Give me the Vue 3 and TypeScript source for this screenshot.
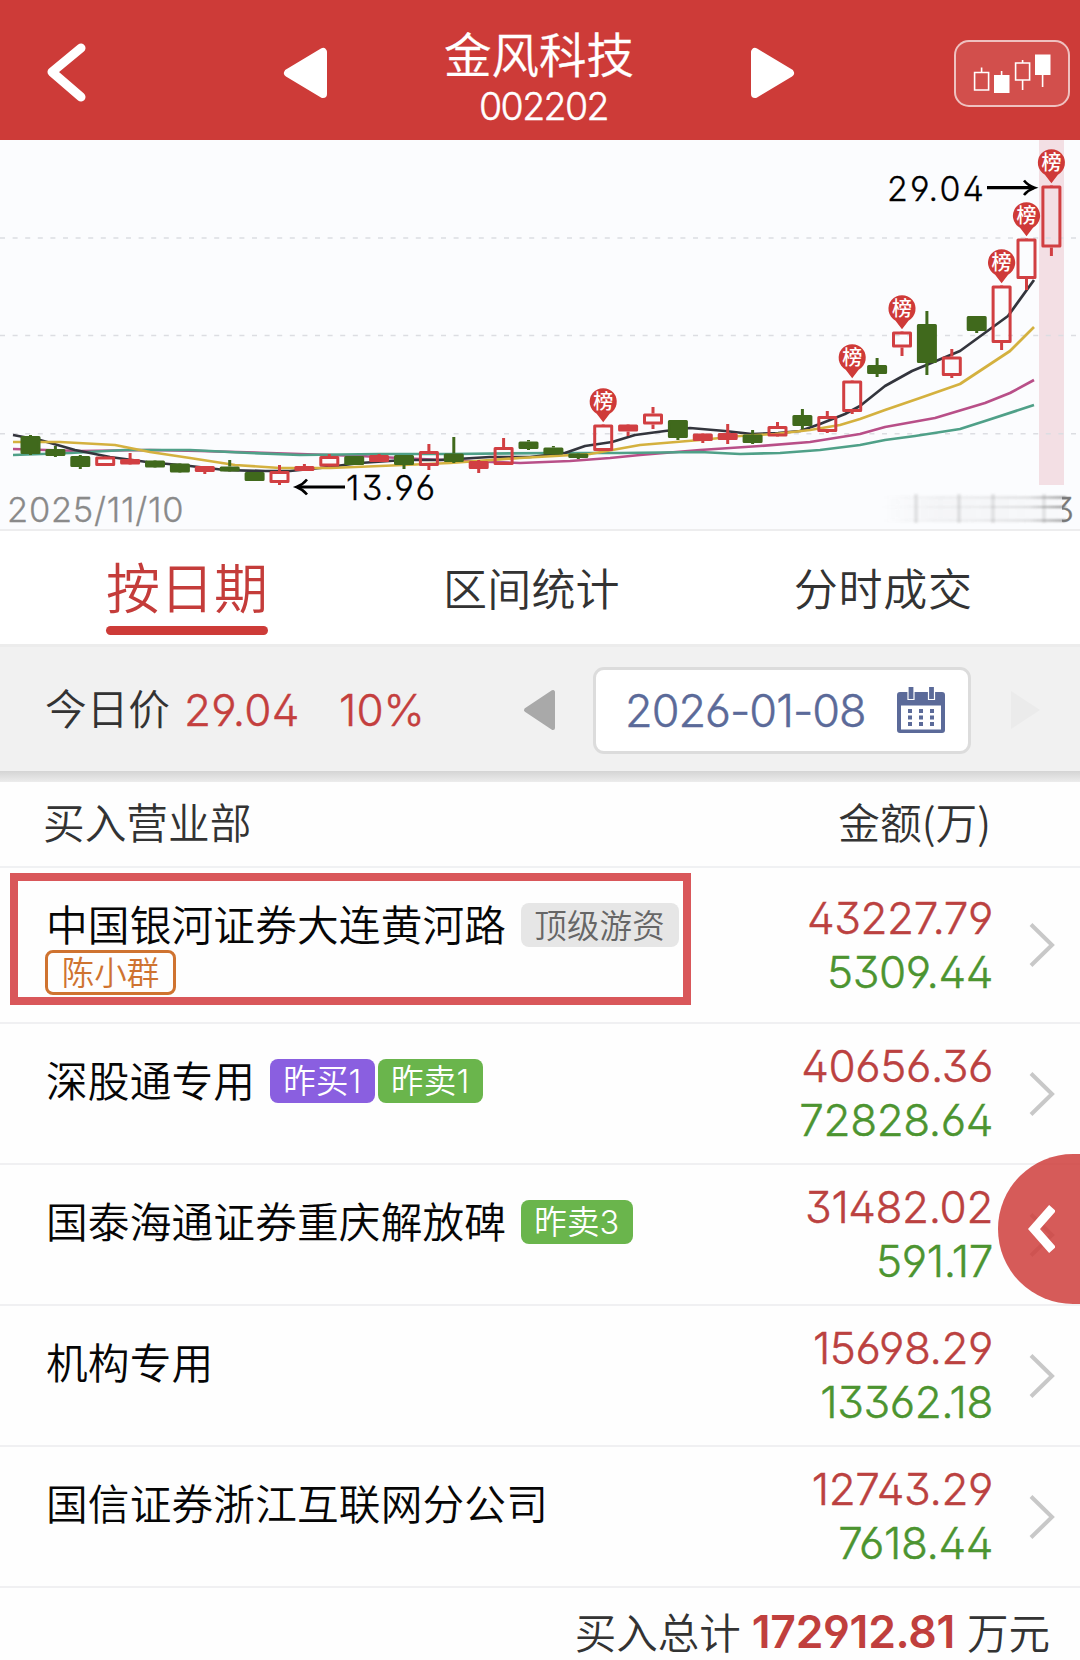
<script setup lang="ts">
type Kind = 'up' | 'down' | 'flat'
interface Candle { kind: Kind; top: number; bottom: number; high: number; low: number; listed?: boolean }
interface Tag { text: string; tone: string }
interface Seat { name: string; tags: Tag[]; owner?: string; buy: string; sell: string; focus?: boolean }

// kind, body top, body bottom, wick high, wick low, on the billboard list
const raw: [Kind, number, number, number, number, boolean?][] = [
  ['down', 436, 454, 435, 455], ['down', 449, 456, 446, 457], ['down', 456, 467, 455, 469],
  ['up', 456.5, 466, 456, 466], ['flat', 459, 464.5, 453, 465], ['down', 460.5, 467.5, 461, 468],
  ['down', 463.5, 472.5, 464, 473], ['flat', 466, 472, 466, 474], ['down', 466.5, 471.5, 460, 472],
  ['down', 472, 481, 472, 481], ['up', 471, 483, 465, 485], ['flat', 466, 471, 464, 471],
  ['up', 456, 466.5, 454, 467], ['down', 456, 465, 456, 465], ['flat', 455, 462, 454, 462],
  ['down', 455, 465, 455, 469], ['up', 451, 466, 444, 470], ['down', 453.5, 462, 437, 463],
  ['flat', 461, 469, 460, 473], ['up', 447, 465, 438, 465], ['down', 441.5, 449, 440, 450],
  ['down', 447.5, 454.5, 446, 455], ['down', 453.5, 458, 454, 459], ['up', 424.5, 451, 425, 451, true],
  ['flat', 424.5, 431.5, 424, 436], ['up', 413.5, 424.5, 407, 429], ['down', 420, 438, 420, 440],
  ['flat', 433.5, 441, 433, 443], ['flat', 433, 440, 424, 444], ['down', 434.5, 443, 430, 444],
  ['up', 426, 436.5, 422, 436], ['down', 415, 426, 409, 429], ['up', 416, 432, 411, 433],
  ['up', 380.5, 412, 381, 414, true], ['down', 365, 374, 358, 377], ['up', 331.5, 347.5, 332, 356, true],
  ['down', 324, 363, 311, 375], ['up', 356.5, 376, 349, 378], ['down', 316, 331, 316, 333],
  ['up', 285.5, 343, 285, 350, true], ['up', 238.5, 279, 239, 290, true], ['up', 185.5, 247.5, 186, 256, true],
]
const candles = raw.map(([kind, top, bottom, high, low, listed], i) => {
  const c: Candle = { kind, top, bottom, high, low, listed }
  return { ...c, x: 30.5 + i * 24.9, color: kind === 'down' ? '#40691c' : '#d13f42' }
})

const averages = [
  { color: '#b84f88', pts: '13,449 80,451 150,450 200,451 300,454 360,456 420,459 520,463 570,461 610,458 640,455 700,450 760,446 810,442 860,434 885,427 935,418 985,403 1010,393 1034,380' },
  { color: '#4fa088', pts: '13,455 70,453 125,450 190,450 250,453 300,455 380,454 450,454 560,453 620,453 700,452 740,454 780,453 820,450 860,445 885,440 915,436 960,429 985,421 1034,405' },
  { color: '#33353d', pts: '13,435 40,440 75,450 110,457 147,462 190,466 225,470 265,471 290,471 320,468 360,463 404,460 440,460 490,457 530,457 565,453 585,446 612,442 635,435 665,431 690,428 725,431 752,434 778,433 800,431 820,424 845,414 860,406 885,386 912,371 960,351 1008,316 1034,280' },
  { color: '#d4b13f', pts: '13,442 60,442 115,445 150,452 190,458 235,465 280,468 330,468 380,466 450,463 520,458 590,454 640,445 700,440 740,436 775,434 810,430 840,425 860,419 885,410 920,398 960,384 1010,351 1034,327' },
]

const seats: Seat[] = [
  { name: '中国银河证券大连黄河路', tags: [{ text: '顶级游资', tone: 'grey' }], owner: '陈小群', buy: '43227.79', sell: '5309.44', focus: true },
  { name: '深股通专用', tags: [{ text: '昨买1', tone: 'purple' }, { text: '昨卖1', tone: 'green' }], buy: '40656.36', sell: '72828.64' },
  { name: '国泰海通证券重庆解放碑', tags: [{ text: '昨卖3', tone: 'green' }], buy: '31482.02', sell: '591.17' },
  { name: '机构专用', tags: [], buy: '15698.29', sell: '13362.18' },
  { name: '国信证券浙江互联网分公司', tags: [], buy: '12743.29', sell: '7618.44' },
]
</script>

<template>
  <div class="app">
    <header class="top">
      <svg class="back" width="44" height="62" viewBox="0 0 44 62"><path d="M37 7 L8 31 L37 56" /></svg>
      <svg class="prev" width="46" height="52" viewBox="0 0 46 52"><path d="M5 26 L40 5 V47 Z" /></svg>
      <div class="title">
        <div class="name">金风科技</div>
        <div class="code num">002202</div>
      </div>
      <svg class="next" width="46" height="52" viewBox="0 0 46 52"><path d="M41 26 L6 5 V47 Z" /></svg>
      <div class="kbtn">
        <svg width="112" height="63" viewBox="0 0 112 63">
          <g fill="none" stroke="#fff" stroke-width="1.6">
            <path d="M18.6 30.5 h14 v17.5 h-14z M25.6 30.5 v-5 M45.6 35 v-6 M59.6 21 h14 v17 h-14z M66.6 21 v-3 M66.6 38 v10 M86.6 30 v15" />
          </g>
          <path fill="#fff" d="M38 33 h15.500 v18 h-15.500z M79 12.500 h15.500 v20.500 h-15.500z" />
        </svg>
      </div>
    </header>

    <section class="chart">
      <svg width="1080" height="389" viewBox="0 140 1080 389">
        <defs>
          <linearGradient id="smear" x1="0" x2="1" y1="0" y2="0">
            <stop offset="0" stop-color="#777" stop-opacity="0" />
            <stop offset=".5" stop-color="#777" stop-opacity=".1" />
            <stop offset=".8" stop-color="#777" stop-opacity=".25" />
            <stop offset="1" stop-color="#777" stop-opacity=".9" />
          </linearGradient>
          <linearGradient id="haze" x1="0" x2="1" y1="0" y2="0">
            <stop offset="0" stop-color="#777" stop-opacity="0" />
            <stop offset=".3" stop-color="#777" stop-opacity=".05" />
            <stop offset="1" stop-color="#777" stop-opacity=".02" />
          </linearGradient>
          <filter id="soft" x="-10%" y="-20%" width="120%" height="140%"><feGaussianBlur stdDeviation="1" /></filter>
          <clipPath id="tail"><rect x="1062" y="490" width="18" height="38" /></clipPath>
        </defs>
        <rect x="1039" y="140" width="25" height="345" fill="#f3dfe4" />
        <g stroke="#dcdde2" stroke-width="1.6" stroke-dasharray="5 7.600">
          <line v-for="y in [238, 335.5, 433.7]" :key="y" x1="0" x2="1080" :y1="y" :y2="y" />
        </g>
        <polyline v-for="a in averages" :key="a.color" :points="a.pts" fill="none" :stroke="a.color" stroke-width="2.700" stroke-linejoin="round" />
        <g v-for="c in candles" :key="c.x" :stroke="c.color" stroke-width="3" stroke-linejoin="round">
          <line :x1="c.x" :x2="c.x" :y1="c.high" :y2="c.top" />
          <line :x1="c.x" :x2="c.x" :y1="c.bottom" :y2="c.low" />
          <rect :x="c.x - 8.500" :y="c.top + 1.500" width="17" :height="c.bottom - c.top - 3"
            :fill="c.kind === 'up' ? 'none' : c.color" />
        </g>
        <template v-for="c in candles" :key="'p' + c.x">
          <g v-if="c.listed" :transform="`translate(${c.x} ${c.top - 22.8})`">
            <path d="M0 20.500 L-6.500 12 A13.600 13.600 0 1 1 6.500 12 Z" fill="#cf3a38" />
            <text class="pin" x="0" y="7.500" text-anchor="middle">榜</text>
          </g>
        </template>
        <g fill="none" stroke="#000" stroke-width="3.200">
          <path d="M987 187.700 H1034" />
          <path d="M345 487 H298" />
        </g>
        <g fill="none" stroke="#000" stroke-width="2.600" stroke-linejoin="miter">
          <path d="M1024 180.500 Q1028 185.500 1034.500 187.700 Q1028 190 1024 195" />
          <path d="M307 479.500 Q303 484.500 296.500 487 Q303 489.500 307 494.500" />
        </g>
        <text class="num mark" x="887" y="200.500" textLength="97" lengthAdjust="spacing">29.04</text>
        <text class="num mark" x="346" y="499.500" textLength="89" lengthAdjust="spacing">13.96</text>
        <text class="num day" x="7" y="521.500" textLength="176.500" lengthAdjust="spacing">2025/11/10</text>
        <g filter="url(#soft)">
          <path d="M880 496.500 h186 v2 h-186z M880 506 h186 v2 h-186z M880 519.500 h186 v2 h-186z" fill="url(#smear)" />
          <path d="M885 496 h180 v26 h-180z" fill="url(#haze)" />
          <path d="M914 494 h4 v29 h-4z M957 494 h4 v29 h-4z M991 494 h4 v29 h-4z M1042 494 h4 v29 h-4z" fill="#777" opacity=".17" />
        </g>
        <text class="num day end" x="1053" y="521.500" clip-path="url(#tail)">3</text>
      </svg>
    </section>

    <nav class="tabs">
      <div class="tab on">按日期</div>
      <div class="tab mid">区间统计</div>
      <div class="tab last">分时成交</div>
    </nav>

    <section class="bar">
      <span class="label">今日价</span>
      <span class="num price">29.04</span>
      <span class="num pct">10%</span>
      <svg class="dprev" width="33" height="42" viewBox="0 0 33 42"><path d="M3 21 L30 3 V39 Z" fill="#a9a9a9" stroke="#a9a9a9" stroke-width="4" stroke-linejoin="round" /></svg>
      <div class="date">
        <span class="num">2026-01-08</span>
        <svg width="48" height="46" viewBox="0 0 48 46">
          <path fill="#5b6a99" fill-rule="evenodd" d="M3 5 H45 Q48 5 48 8 V43 Q48 46 45 46 H3 Q0 46 0 43 V8 Q0 5 3 5 Z M4 18.500 V42.500 H44 V18.500 Z" />
          <path fill="#5b6a99" stroke="#fff" stroke-width="1.200" d="M11 -1 h6 v13.500 h-6z M31.500 -1 h6 v13.500 h-6z" />
          <path fill="#5b6a99" d="M11 22h4v4h-4z M22 22h4v4h-4z M33 22h4v4h-4z M11 28.500h4v4h-4z M22 28.500h4v4h-4z M33 28.500h4v4h-4z M11 35h4v4h-4z M22 35h4v4h-4z M33 35h4v4h-4z" />
        </svg>
      </div>
      <svg class="dnext" width="31" height="40" viewBox="0 0 31 40"><path d="M1 1 L30 20 L1 39 Z" fill="#ebebeb" /></svg>
    </section>
    <div class="shade"></div>

    <div class="thead"><span>买入营业部</span><span>金额(万)</span></div>

    <div v-for="s in seats" :key="s.name" class="row" :class="{ tall: s.focus }">
      <div class="who">
        <div class="line">
          <span class="seat">{{ s.name }}</span>
          <span v-for="t in s.tags" :key="t.text" class="tag" :class="t.tone">{{ t.text }}</span>
        </div>
        <span v-if="s.owner" class="tag owner">{{ s.owner }}</span>
      </div>
      <div class="amounts num">
        <div class="buy">{{ s.buy }}</div>
        <div class="sell">{{ s.sell }}</div>
      </div>
      <svg class="go" width="26" height="46" viewBox="0 0 26 46"><path d="M2 2.500 L23 23 L2 43.500" fill="none" stroke="#c8c8c8" stroke-width="4" /></svg>
      <div v-if="s.focus" class="focus"></div>
    </div>

    <footer class="total"><span>买入总计</span><b class="num">172912.81</b><span>万元</span></footer>

    <div class="drawer">
      <svg width="27" height="48" viewBox="0 0 27 48"><path d="M24.500 3 L6 24 L24.500 45" /></svg>
    </div>
  </div>
</template>

<style>
body { margin: 0; background: #fff; }
</style>

<style scoped>
.app { position: relative; width: 1080px; height: 1660px; overflow: hidden; background: #fefefe; font-family: "Noto Sans CJK SC", sans-serif; font-weight: 350; color: #333; }
.app * { box-sizing: border-box; }
svg { display: block; flex: none; }
.num { font-family: Inter, "Liberation Sans", sans-serif; font-weight: 300; font-feature-settings: "cv03", "cv04", "ss01"; -webkit-text-stroke: .45px currentColor; }
svg .num { -webkit-text-stroke: 0; }

.top { display: flex; align-items: flex-start; height: 140px; background: #cd3b38; color: #fff; }
.back { margin: 41px 0 0 44px; }
.back path { fill: none; stroke: #fff; stroke-width: 9; stroke-linecap: round; stroke-linejoin: round; }
.prev { margin: 47px 0 0 195px; }
.next { margin: 47px 0 0 113px; }
.prev path, .next path { fill: #fff; stroke: #fff; stroke-width: 8; stroke-linejoin: round; }
.title { width: 194px; margin-left: 113px; text-align: center; white-space: nowrap; }
.name { height: 60px; margin-top: 23px; font-size: 47.5px; line-height: 60px; -webkit-text-stroke: .3px #fff; }
.code { height: 44px; margin: 2px 0 0 9px; font-size: 37.500px; line-height: 44px; letter-spacing: -1.600px; }
.kbtn { width: 116px; height: 67px; margin: 40px 10px 0 auto; border: 2px solid rgba(255,255,255,.65); border-radius: 15px; background: rgba(255,255,255,.1); }

.chart { height: 391px; background: #fbfcfe; border-bottom: 2px solid #ededee; }
.pin { font-size: 20px; fill: #fff; font-weight: 500; }
.mark { font-size: 34px; fill: #000; stroke: #000; stroke-width: .3px; }
.day { font-size: 34.500px; fill: #8a8a8a; stroke: #8a8a8a; stroke-width: .3px; }
.end { fill: #777; }

.tabs { display: flex; height: 113px; padding-left: 106px; background: #fff; white-space: nowrap; }
.tab { height: 100px; padding-top: 24px; font-size: 44px; line-height: 64px; }
.tab.on { width: 162px; height: 104px; padding-top: 23px; color: #c43c3a; font-size: 54px; text-align: center; }
.tab.on::after { content: ""; display: block; height: 9px; margin-top: 8px; border-radius: 5px; background: #cd3b38; }
.mid { margin-left: 175px; letter-spacing: .2px; }
.last { margin-left: 174px; letter-spacing: .7px; }

.bar { display: flex; align-items: center; height: 127px; padding: 2px 0 0 45px; background: #f1f1f1; border-top: 3px solid #ececec; white-space: nowrap; }
.label { font-size: 41.700px; line-height: 60px; margin-top: -6px; }
.price, .pct { color: #c43f3e; font-size: 44px; }
.price { width: 138px; margin-left: 14px; letter-spacing: .3px; }
.pct { width: 184px; margin-left: 17px; }
.dprev { margin-left: 0; }
.date { display: flex; align-items: center; width: 378px; height: 87px; margin-left: 37px; padding-left: 29px; border: 3px solid #dcdcdc; border-radius: 11px; background: #fff; color: #5b6a99; }
.date .num { width: 272px; font-size: 45px; letter-spacing: -1px; }
.dnext { margin-left: 39px; }
.shade { height: 11px; background: linear-gradient(#d4d4d4, #ececec); }

.thead { display: flex; justify-content: space-between; height: 86px; padding: 8px 89px 0 43px; border-bottom: 2px solid #f0f1f3; font-size: 41.700px; line-height: 62px; }

.row { position: relative; display: flex; height: 141px; border-bottom: 2px solid #f0f0f2; }
.row.tall { height: 156px; }
.who { flex: 1; padding: 35px 0 0 46px; }
.line { display: flex; align-items: center; height: 44px; white-space: nowrap; }
.seat { margin: -5px 15px 0 0; color: #060606; font-size: 41.700px; line-height: 44px; letter-spacing: .15px; }
.tag { height: 44px; padding: 0 14px; border-radius: 8px; font-size: 32.500px; line-height: 41px; }
.tag + .tag { margin-left: 3px; }
.grey { padding-left: 13px; background: #e6e6e6; color: #666; letter-spacing: .2px; }
.purple, .green { padding: 0 13.500px 0 13px; font-family: Inter, "Noto Sans CJK SC", sans-serif; line-height: 45px; letter-spacing: .2px; color: #fff; }
.purple { background: #8a5fe0; }
.green { background: #6ab54c; }
.owner { display: block; width: 131px; height: 45px; margin: 3px 0 0 -1px; padding: 0; border: 3px solid #cf7330; color: #cf7330; text-align: center; line-height: 35px; }
.amounts { display: flex; flex-direction: column; justify-content: center; padding-bottom: 1px; text-align: right; font-size: 44px; line-height: 54px; letter-spacing: -.4px; }
.buy { color: #bb4140; }
.sell { color: #4c9430; }
.go { align-self: center; margin: 0 25px 0 36px; }
.focus { position: absolute; left: 10px; top: 5px; width: 681px; height: 132px; border: 8px solid #d9575a; }

.total { display: flex; align-items: flex-start; justify-content: flex-end; height: 73px; padding: 13px 30px 0 0; font-size: 41.500px; line-height: 60px; white-space: nowrap; }
.total b { margin: 1px 12px 0 11px; color: #c03f3d; font-size: 44.500px; font-weight: 620; letter-spacing: -.3px; -webkit-text-stroke: 0; }

.drawer { position: absolute; left: 998px; top: 1154px; display: flex; align-items: center; width: 84px; height: 150px; padding-left: 30px; border-radius: 75px 0 0 75px; background: rgba(207,64,62,.86); }
.drawer path { fill: none; stroke: #fff; stroke-width: 9; }
</style>
